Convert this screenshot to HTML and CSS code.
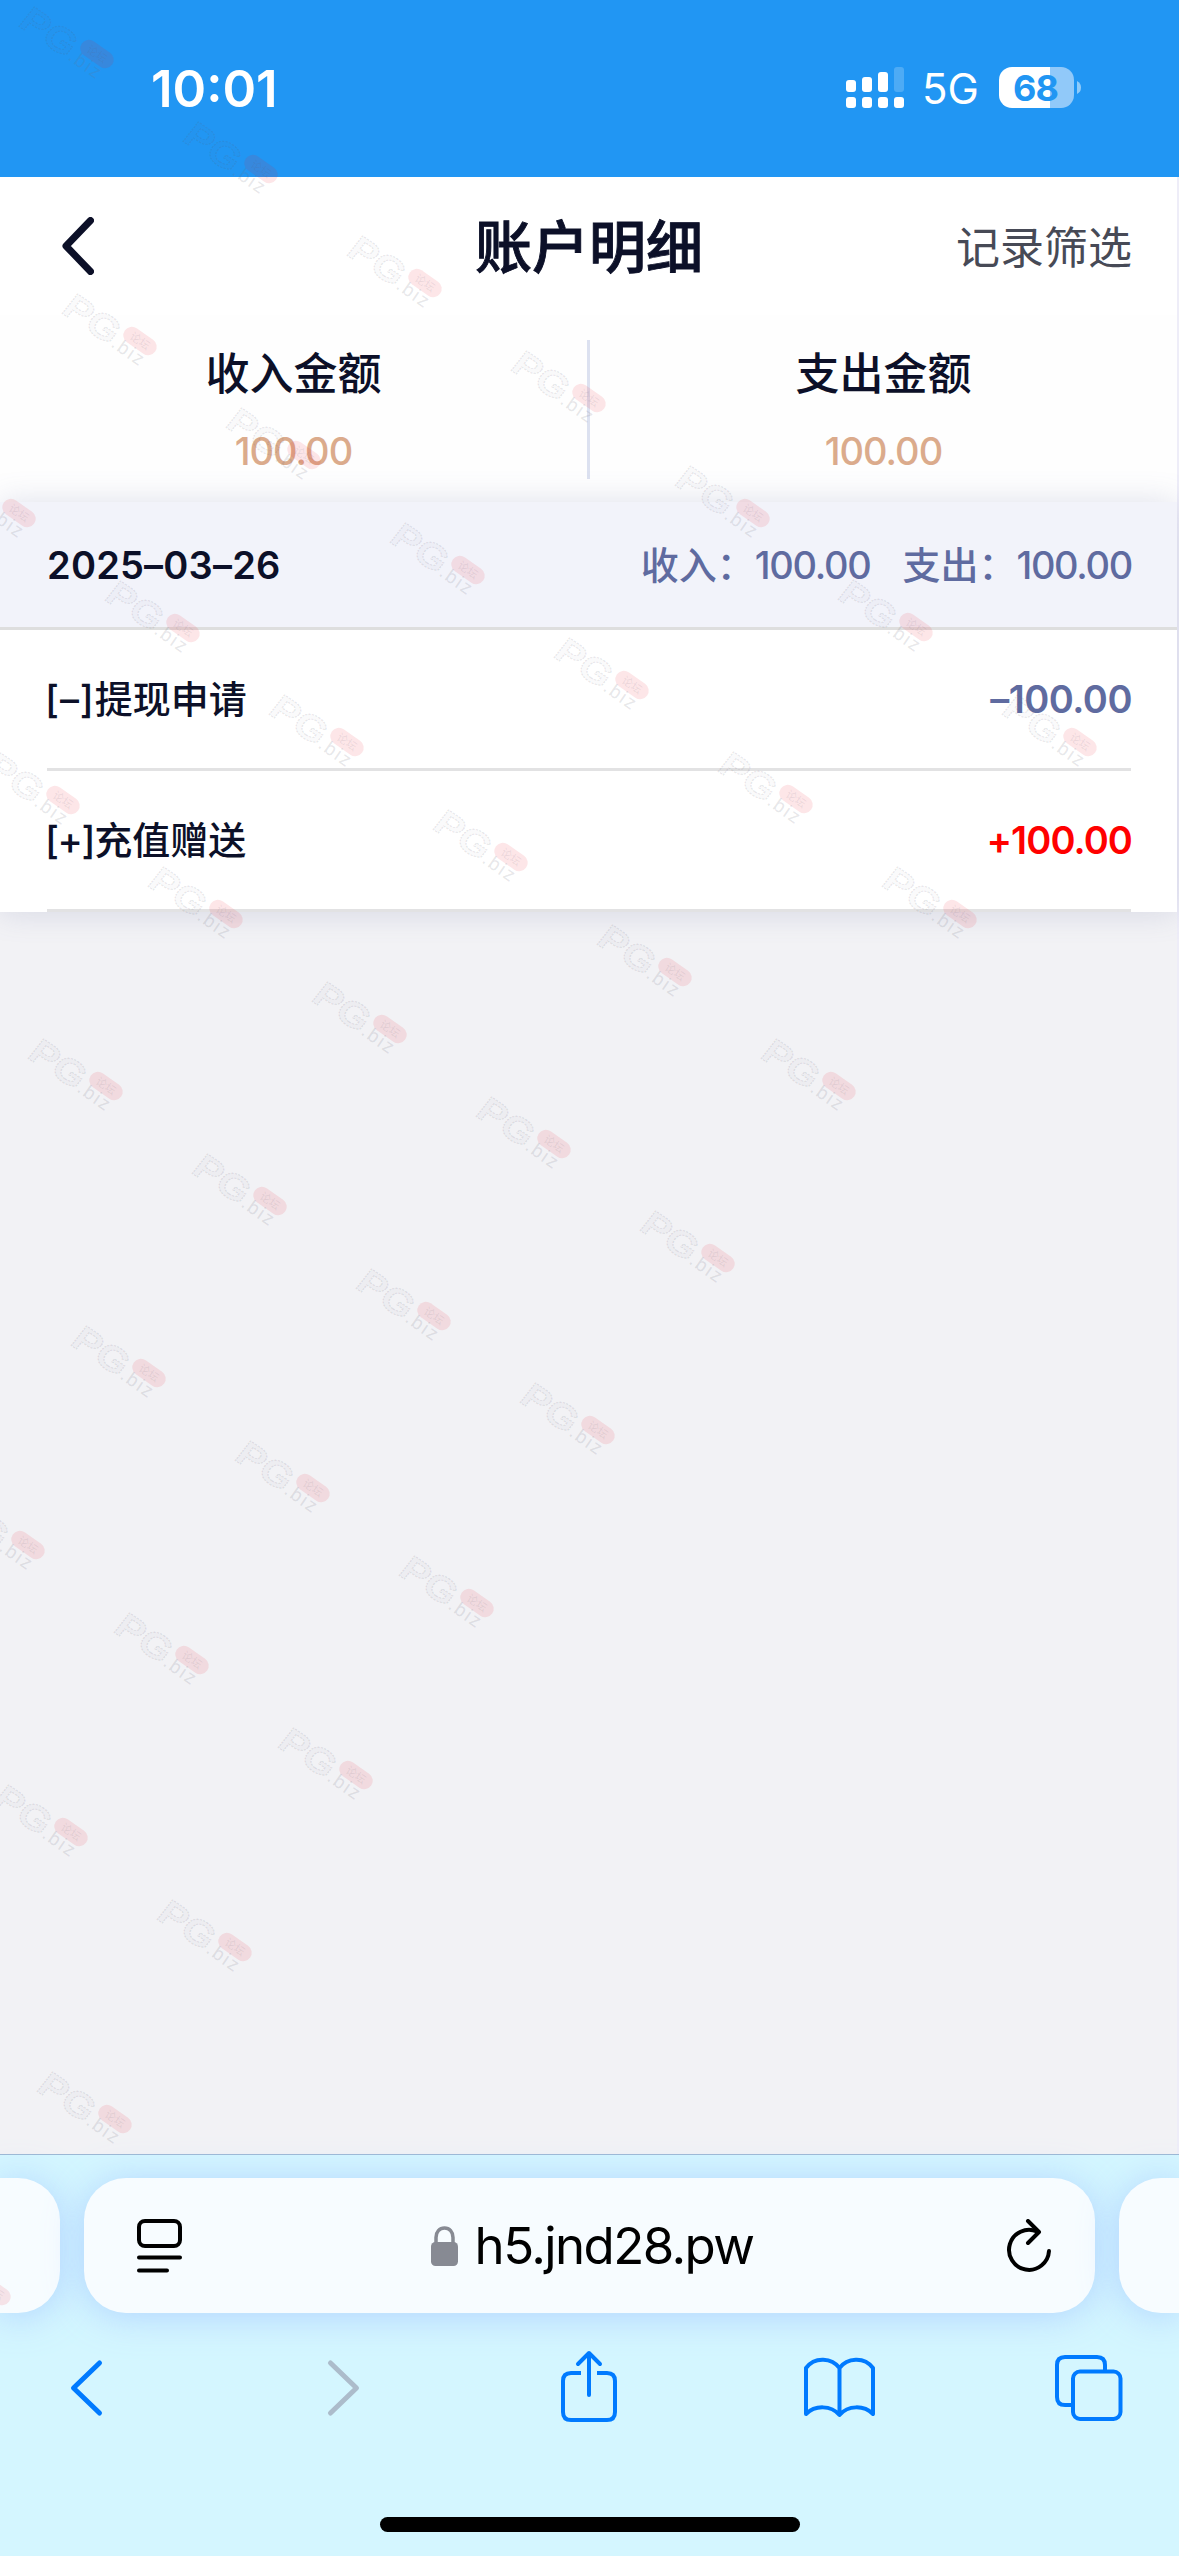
FILE: index.html
```html
<!DOCTYPE html>
<html lang="zh-CN">
<head>
<meta charset="utf-8">
<title>账户明细</title>
<link rel="stylesheet" href="styles.css">
</head>
<body>
<div class="screen">
  <header class="status">
    <span class="clock">10:01</span>
    <div class="indicators">
      <svg class="signal" viewBox="0 0 58 41" width="58" height="41" fill="#fff">
        <rect x="0" y="13" width="10" height="12" rx="3"/><rect x="16" y="10" width="10" height="15" rx="3"/><rect x="32" y="5" width="10" height="20" rx="3"/><rect x="48" y="0" width="10" height="25" rx="3" opacity=".2"/>
        <rect x="0" y="30" width="10" height="11" rx="3"/><rect x="16" y="30" width="10" height="11" rx="3"/><rect x="32" y="30" width="10" height="11" rx="3"/><rect x="48" y="30" width="10" height="11" rx="3"/>
      </svg>
      <span class="network">5G</span>
      <div class="battery">68</div>
      <svg class="nub" viewBox="0 0 4 13" width="4" height="13"><path d="M0 0Q4 2 4 6.500T0 13Z" fill="#fff" opacity=".5"/></svg>
    </div>
  </header>

  <main class="page">
    <nav class="nav">
      <svg class="nav-back" viewBox="0 0 34 58" width="34" height="58"><path d="M30.500 3.500L6 29L30.500 54.500" fill="none" stroke="#0c1028" stroke-width="7" stroke-linecap="round" stroke-linejoin="round"/></svg>
      <h1 class="title">账户明细</h1>
      <span class="filter">记录筛选</span>
    </nav>
    <section class="summary">
      <div class="total"><span class="label">收入金额</span><span class="value">100.00</span></div>
      <div class="total"><span class="label">支出金额</span><span class="value">100.00</span></div>
    </section>
    <section class="day">
      <div class="day-head">
        <span class="date">2025–03–26</span>
        <span class="sums"><span>收入：<span class="num">100.00</span></span><span>支出：<span class="num">100.00</span></span></span>
      </div>
      <ul class="records">
        <li class="record"><span class="kind"><span class="minus">[–]</span>提现申请</span><span class="amount out">–100.00</span></li>
        <li class="record"><span class="kind"><span class="plus">[+]</span>充值赠送</span><span class="amount in">+100.00</span></li>
      </ul>
    </section>
  </main>

  <footer class="browser">
    <div class="tabs">
      <div class="tab side"></div>
      <div class="tab current">
        <svg viewBox="0 0 45 54" width="45" height="54" fill="none" stroke="#000" stroke-width="4" stroke-linecap="round"><rect x="2" y="2" width="41" height="25" rx="6"/><path d="M2 38.500H43M2 51.500H30"/></svg>
        <div class="address">
          <svg viewBox="0 0 27 40" width="27" height="40"><path d="M5 18V11.500C5 6 8.500 2 13.500 2S22 6 22 11.500V18" fill="none" stroke="#878a93" stroke-width="3.500"/><rect y="16" width="27" height="24" rx="4.500" fill="#878a93"/></svg>
          <span class="host">h5.jnd28.pw</span>
        </div>
        <svg viewBox="0 0 46 54" width="46" height="54" fill="none" stroke="#000" stroke-width="4" stroke-linecap="round" stroke-linejoin="round"><path d="M43 32A20 20 0 1 1 31 12.500"/><path d="M22 2L33 13L22 24"/></svg>
      </div>
      <div class="tab side"></div>
    </div>
    <div class="toolbar">
      <svg viewBox="46 2340 80 90" width="80" height="90" stroke="#007aff" stroke-width="5"><path d="M99.500 2363L73.500 2388L99.500 2413"/></svg>
      <svg viewBox="297 2340 80 90" width="80" height="90" stroke="#acbccb" stroke-width="5"><path d="M330.500 2363L356.500 2388L330.500 2413"/></svg>
      <svg viewBox="548 2340 80 90" width="80" height="90" stroke="#007aff" stroke-width="4"><path d="M589 2395V2353M578 2364L589 2353L600 2364"/><path d="M581 2373H571Q563 2373 563 2381V2412Q563 2420 571 2420H607Q615 2420 615 2412V2381Q615 2373 607 2373H597" stroke-linecap="butt"/></svg>
      <svg viewBox="799 2340 80 90" width="80" height="90" stroke="#007aff" stroke-width="4"><path d="M839.500 2368C832 2358 815 2356 806 2368V2414C815 2405 831 2405 839.500 2415C848 2405 864 2405 873 2414V2368C864 2356 847 2358 839.500 2368V2414"/></svg>
      <svg viewBox="1050 2340 80 90" width="80" height="90" stroke="#007aff" stroke-width="4"><path d="M1071 2405H1065Q1057 2405 1057 2397V2365Q1057 2357 1065 2357H1097Q1105 2357 1105 2365V2370" stroke-linecap="butt"/><rect x="1073" y="2371.500" width="47.500" height="47.500" rx="7"/></svg>
    </div>
    <div class="home"></div>
  </footer>

  <svg class="watermark" width="1179" height="2556" viewBox="0 0 1179 2556" aria-hidden="true">
    <defs>
      <g id="mark">
        <text class="wm-pg" transform="translate(4 43) rotate(34) skewX(-4)" textLength="60" lengthAdjust="spacingAndGlyphs">PG</text>
        <rect class="wm-pill" x="-18.500" y="-8.500" width="37" height="17" rx="8.500" transform="translate(84 72) rotate(35)"/>
        <text class="wm-cn" transform="translate(84 72) rotate(35)" x="-11" y="4">论坛</text>
        <text class="wm-biz" transform="translate(54 77) rotate(35)" textLength="35">.biz</text>
      </g>
    </defs>
    <use href="#mark" x="13" y="-18"/><use href="#mark" x="177" y="97"/><use href="#mark" x="341" y="211"/><use href="#mark" x="505" y="326"/><use href="#mark" x="669" y="441"/><use href="#mark" x="832" y="555"/><use href="#mark" x="996" y="670"/>
    <use href="#mark" x="56" y="269"/><use href="#mark" x="220" y="383"/><use href="#mark" x="384" y="498"/><use href="#mark" x="548" y="613"/><use href="#mark" x="712" y="727"/><use href="#mark" x="876" y="842"/>
    <use href="#mark" x="-65" y="441"/><use href="#mark" x="99" y="556"/><use href="#mark" x="263" y="670"/><use href="#mark" x="427" y="785"/><use href="#mark" x="591" y="900"/><use href="#mark" x="755" y="1014"/>
    <use href="#mark" x="-21" y="728"/><use href="#mark" x="142" y="842"/><use href="#mark" x="306" y="957"/><use href="#mark" x="470" y="1072"/><use href="#mark" x="634" y="1186"/>
    <use href="#mark" x="22" y="1014"/><use href="#mark" x="186" y="1129"/><use href="#mark" x="350" y="1244"/><use href="#mark" x="514" y="1358"/>
    <use href="#mark" x="65" y="1301"/><use href="#mark" x="229" y="1416"/><use href="#mark" x="393" y="1531"/>
    <use href="#mark" x="-56" y="1473"/><use href="#mark" x="108" y="1588"/><use href="#mark" x="272" y="1703"/>
    <use href="#mark" x="-13" y="1760"/><use href="#mark" x="151" y="1875"/>
    <use href="#mark" x="31" y="2047"/>
    <use href="#mark" x="-90" y="2219"/>
  </svg>
</div>
</body>
</html>
```
FILE: styles.css
```css
* { box-sizing: border-box; margin: 0; padding: 0; }

body {
  width: 1179px;
  background: #eeedf8;
  font-family: Inter, "Noto Sans CJK SC", sans-serif;
  color: #0c1028;
}

.screen {
  position: relative;
  display: flex;
  flex-direction: column;
  width: 1179px;
  height: 2556px;
  overflow: hidden;
}

svg { display: block; flex: none; }

.status {
  display: flex;
  justify-content: space-between;
  align-items: center;
  height: 177px;
  padding: 0 98px 2px 151px;
  background: #2196f3;
  color: #fff;
}

.clock { font-size: 51px; font-weight: 600; margin-top: 2px; }
.indicators { display: flex; align-items: center; }
.network { margin: 2px 0 0 18px; font-size: 42px; line-height: 41px; width: 77px; }

.battery {
  width: 75px;
  height: 41px;
  border-radius: 13px;
  background: linear-gradient(90deg, #fff 51px, #91c9f9 51px);
  color: #2196f3;
  font-size: 36px;
  font-weight: 700;
  letter-spacing: -1px;
  line-height: 42px;
  text-align: center;
  padding-right: 2px;
}

.nub { margin-left: 3px; }

.page {
  width: 1177px;
  height: 1977px;
  background: #f2f2f5;
}

.nav {
  display: grid;
  grid-template-columns: 1fr auto 1fr;
  align-items: center;
  height: 138px;
  padding: 2px 45px 0 60px;
  background: #fff;
}

.nav-back { margin-top: -3px; }
.title {
  font-size: 57px;
  font-weight: 500;
  line-height: 60px;
  margin-left: -14px;
  padding-top: 1px;
  -webkit-text-stroke: 0.9px #0c1028;
}
.filter { justify-self: end; font-size: 44px; line-height: 60px; padding-top: 1px; color: #474a56; }

.summary {
  display: flex;
  height: 187px;
  padding-top: 25px;
  background: #fefefe;
}

.total {
  flex: 1;
  height: 139px;
  display: flex;
  flex-direction: column;
  align-items: center;
  border-right: 3px solid #dce1f0;
}

.total:last-child { border-right: 0; }
.label { margin-top: 4px; font-size: 44px; font-weight: 500; line-height: 60px; }
.value {
  margin-top: 22px;
  font-size: 38px;
  font-weight: 450;
  letter-spacing: -1px;
  line-height: 50px;
  color: #dbab8c;
}

.day {
  background: #fff;
  box-shadow: 0 0 30px rgba(95, 107, 160, .2);
  position: relative;
}

.day-head {
  display: flex;
  justify-content: space-between;
  align-items: center;
  height: 128px;
  padding: 0 45px 0 47px;
  background: #f2f3fa;
  border-bottom: 3px solid #dedede;
  font-size: 38px;
}

.date { font-weight: 600; letter-spacing: 0.2px; }
.sums { display: flex; gap: 32px; color: #5f6ba0; font-weight: 500; padding-bottom: 4px; }
.num { letter-spacing: -1.3px; }

.records { list-style: none; padding: 0 46px 0 47px; }

.record {
  display: flex;
  justify-content: space-between;
  align-items: center;
  height: 141px;
  border-bottom: 3px solid #e2e2e3;
  font-size: 38px;
  font-weight: 500;
}

.kind { padding-bottom: 6px; margin-left: -2px; }
.minus { letter-spacing: 0.9px; }
.plus { letter-spacing: -1.4px; }
.amount { font-weight: 600; letter-spacing: -0.9px; margin-right: -1px; }
.out { color: #5f6ba0; letter-spacing: -0.5px; }
.in { color: #f00; }

.browser {
  height: 402px;
  border-top: 1px solid #9db8d4;
  background: #d4f6ff;
}

.tabs { display: flex; justify-content: space-between; padding-top: 23px; }

.tab {
  height: 135px;
  background: #f7fcff;
  box-shadow: 0 3px 36px rgba(165, 200, 255, .75);
}

.side { width: 60px; border-radius: 0 42px 42px 0; }
.side:last-child { border-radius: 42px 0 0 42px; }

.current {
  width: 1011px;
  display: flex;
  align-items: center;
  justify-content: space-between;
  padding: 0 43px 0 53px;
  border-radius: 42px;
}

.address { display: flex; align-items: center; gap: 17px; margin-right: 4px; }
.host { font-size: 51px; letter-spacing: -1.6px; color: #000; }

.toolbar { display: flex; gap: 171px; padding: 27px 0 0 46px; }
.toolbar svg { fill: none; stroke-linecap: round; stroke-linejoin: round; }

.home {
  width: 420px;
  height: 15px;
  margin: 87px auto 0;
  border-radius: 8px;
  background: #000;
}

.watermark { position: absolute; left: 0; top: 0; pointer-events: none; }

.wm-pg {
  font: 700 36px "Liberation Sans", sans-serif;
  fill: rgba(110, 110, 130, .04);
  stroke: rgba(90, 90, 110, .15);
  stroke-width: 1.2;
  stroke-dasharray: 2 1;
}

.wm-pill { fill: rgba(240, 30, 50, .11); }
.wm-cn { font: 11px "Noto Sans CJK SC", sans-serif; fill: rgba(100, 90, 110, .12); }
.wm-biz { font: 19px "Liberation Sans", sans-serif; fill: rgba(110, 110, 125, .17); }
```
